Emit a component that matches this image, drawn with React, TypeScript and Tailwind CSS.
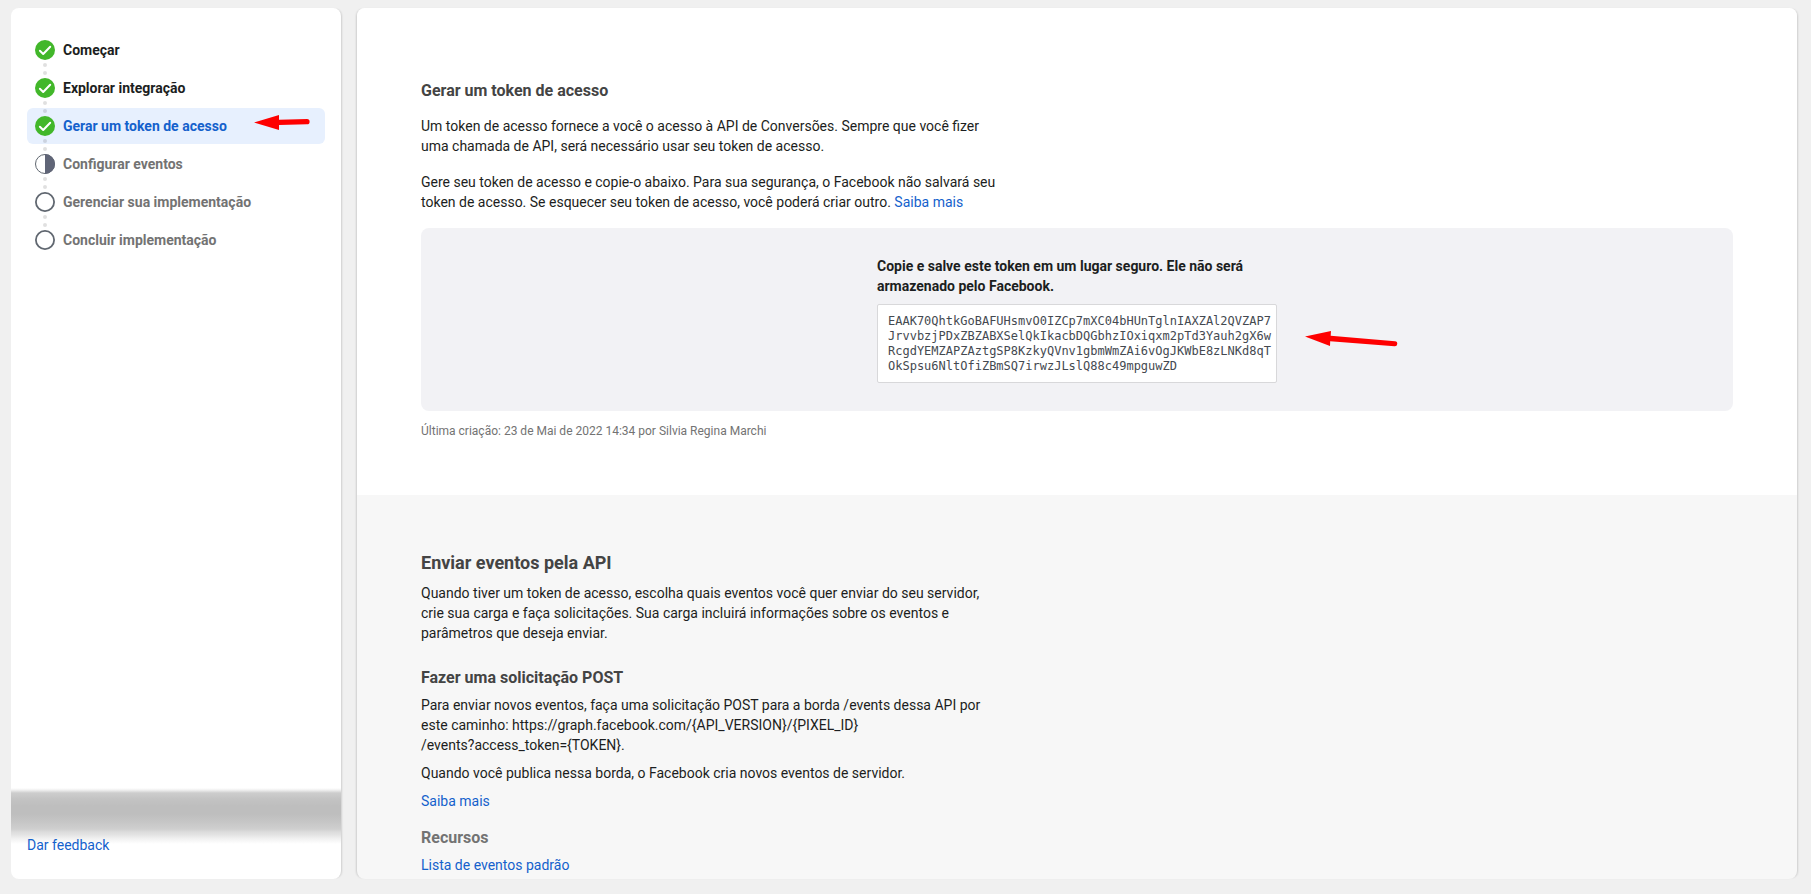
import React from "react";

type StepState = "done" | "half" | "todo";

interface Step {
  label: string;
  state: StepState;
  active?: boolean;
}

const steps: Step[] = [
  { label: "Começar", state: "done" },
  { label: "Explorar integração", state: "done" },
  { label: "Gerar um token de acesso", state: "done", active: true },
  { label: "Configurar eventos", state: "half" },
  { label: "Gerenciar sua implementação", state: "todo" },
  { label: "Concluir implementação", state: "todo" },
];

const token =
  "EAAK70QhtkGoBAFUHsmvO0IZCp7mXC04bHUnTglnIAXZAl2QVZAP7" +
  "JrvvbzjPDxZBZABXSelQkIkacbDQGbhzIOxiqxm2pTd3Yauh2gX6w" +
  "RcgdYEMZAPZAztgSP8KzkyQVnv1gbmWmZAi6vOgJKWbE8zLNKd8qT" +
  "OkSpsu6NltOfiZBmSQ7irwzJLslQ88c49mpguwZD";

function StepIcon({ state }: { state: StepState }) {
  return (
    <svg viewBox="0 0 20 20" className="size-5 shrink-0" aria-hidden="true">
      {state === "done" && (
        <>
          <circle cx="10" cy="10" r="10" fill="#42b72a" />
          <path
            d="M4.9 10.8l3.3 3.2 7-7.3"
            fill="none"
            stroke="#fff"
            strokeWidth="2"
            strokeLinecap="round"
            strokeLinejoin="round"
          />
        </>
      )}
      {state === "half" && (
        <>
          <circle cx="10" cy="10" r="9.5" fill="#fff" stroke="#606770" strokeWidth="1" />
          <path d="M10 0a10 10 0 0 1 0 20z" fill="#606577" />
        </>
      )}
      {state === "todo" && (
        <circle cx="10" cy="10" r="9.1" fill="#fff" stroke="#606770" strokeWidth="1.8" />
      )}
    </svg>
  );
}

function Connector() {
  return (
    <svg
      viewBox="0 0 4 12"
      className="pointer-events-none absolute top-[31px] left-4 z-10 h-3 w-1"
      aria-hidden="true"
    >
      <circle cx="2" cy="2" r="2" fill="#000" fillOpacity="0.12" />
      <circle cx="2" cy="10" r="2" fill="#000" fillOpacity="0.12" />
    </svg>
  );
}

function Link({ children }: { children: React.ReactNode }) {
  return (
    <a href="#" className="text-[#1461cc] hover:underline">
      {children}
    </a>
  );
}

function labelColor(step: Step) {
  if (step.active) return "text-[#1461cc]";
  return step.state === "done" ? "text-[#1c1e21]" : "text-[#737373]";
}

function Sidebar() {
  return (
    <aside className="flex w-[330px] shrink-0 flex-col rounded-lg bg-white pt-6 pb-6 shadow-[2px_0_2px_-1px_rgba(0,0,0,0.14)]">
      <nav>
        <ol className="flex flex-col gap-0.5 px-4">
          {steps.map((step, i) => (
            <li key={step.label} className="relative">
              <a
                href="#"
                aria-current={step.active ? "step" : undefined}
                className={`flex h-9 items-center gap-2 rounded-md px-2 font-bold ${labelColor(step)} ${
                  step.active ? "bg-[#e7f0fe]" : ""
                }`}
              >
                <StepIcon state={step.state} />
                {step.label}
                {step.active && (
                  <svg viewBox="0 0 58 16" className="mr-1.5 mb-2 ml-auto h-4 w-[58px]" aria-hidden="true">
                    <path d="M1 8.5L26 1v4.7l28-.6a2.6 2.6 0 0 1 0 5.2L26 11v5z" fill="#fe0000" />
                  </svg>
                )}
              </a>
              {i < steps.length - 1 && <Connector />}
            </li>
          ))}
        </ol>
      </nav>
      <div className="mt-auto h-[47px] bg-[linear-gradient(to_bottom,#fff_0px,#f0f0f0_2px,#cdcdcd_5px,#c3c3c3_11px,#bebebe_18px,#bebebe_26px,#c6c6c6_34px,#cfcfcf_41px,#dcdcdc_44px,#e4e4e4_47px)]" />
      <div className="bg-[linear-gradient(to_bottom,#e4e4e4_0px,#f2f2f2_4px,#fff_9px)] px-4">
        <Link>Dar feedback</Link>
      </div>
    </aside>
  );
}

function TokenPanel() {
  return (
    <div className="mt-4 flex justify-center rounded-lg bg-[#f2f2f5] py-7">
      <div className="w-[400px]">
        <p className="font-bold">
          Copie e salve este token em um lugar seguro. Ele não será armazenado pelo Facebook.
        </p>
        <div className="relative mt-2">
          <div className="rounded-xs border border-[#d8d8da] bg-white pt-[9px] pr-1 pb-2 pl-2.5 font-['DejaVu_Sans_Mono',monospace] text-[12px] leading-[15px] break-all text-[#444950]">
            {token}
          </div>
          <svg
            viewBox="0 0 94 18"
            className="absolute top-[26px] left-[428px] h-[18px] w-[94px]"
            aria-hidden="true"
          >
            <path d="M0 6.5L26 1l-.3 4.7L90 11.300a2.500 2.500 0 0 1-.5 5L25.200 11.200 25 16z" fill="#fe0000" />
          </svg>
        </div>
      </div>
    </div>
  );
}

export default function App() {
  return (
    <div className="flex h-screen gap-4 bg-[#f0f0f0] pt-2 pr-3.5 pb-[15px] pl-[11px] font-['Roboto',sans-serif] text-[14px] leading-5 text-[#1c1e21]">
      <Sidebar />
      <main className="min-w-0 flex-1 overflow-hidden rounded-lg bg-[#f7f7f7] shadow-[-2px_0_2px_-1px_rgba(0,0,0,0.14),2px_0_2px_-1px_rgba(0,0,0,0.14)]">
        <section className="bg-white px-16 pt-[72px] pb-14">
          <h2 className="text-[16px] leading-[22px] font-bold text-[#444444]">Gerar um token de acesso</h2>
          <p className="mt-3.5 max-w-[576px]">
            Um token de acesso fornece a você o acesso à API de Conversões. Sempre que você fizer uma
            chamada de API, será necessário usar seu token de acesso.
          </p>
          <p className="mt-4 max-w-[576px]">
            Gere seu token de acesso e copie-o abaixo. Para sua segurança, o Facebook não salvará seu
            token de acesso. Se esquecer seu token de acesso, você poderá criar outro.{" "}
            <Link>Saiba mais</Link>
          </p>
          <TokenPanel />
          <p className="mt-3 text-[12px] leading-4 text-[#737373]">
            Última criação: 23 de Mai de 2022 14:34 por Silvia Regina Marchi
          </p>
        </section>
        <section className="px-16 pt-14">
          <h2 className="text-[18px] leading-6 font-bold text-[#444444]">Enviar eventos pela API</h2>
          <p className="mt-2 max-w-[576px]">
            Quando tiver um token de acesso, escolha quais eventos você quer enviar do seu servidor,
            crie sua carga e faça solicitações. Sua carga incluirá informações sobre os eventos e
            parâmetros que deseja enviar.
          </p>
          <h3 className="mt-6 text-[16px] leading-[22px] font-bold text-[#444444]">
            Fazer uma solicitação POST
          </h3>
          <p className="mt-1.5 max-w-[576px]">
            {"Para enviar novos eventos, faça uma solicitação POST para a borda /events dessa API por este caminho: https://graph.facebook.com/{API_VERSION}/{PIXEL_ID}"}
            <br />
            {"/events?access_token={TOKEN}."}
          </p>
          <p className="mt-2 max-w-[576px]">
            Quando você publica nessa borda, o Facebook cria novos eventos de servidor.
          </p>
          <p className="mt-2">
            <Link>Saiba mais</Link>
          </p>
          <h3 className="mt-4 text-[16px] leading-[22px] font-bold text-[#737373]">Recursos</h3>
          <p className="mt-1.5">
            <Link>Lista de eventos padrão</Link>
          </p>
        </section>
      </main>
    </div>
  );
}
